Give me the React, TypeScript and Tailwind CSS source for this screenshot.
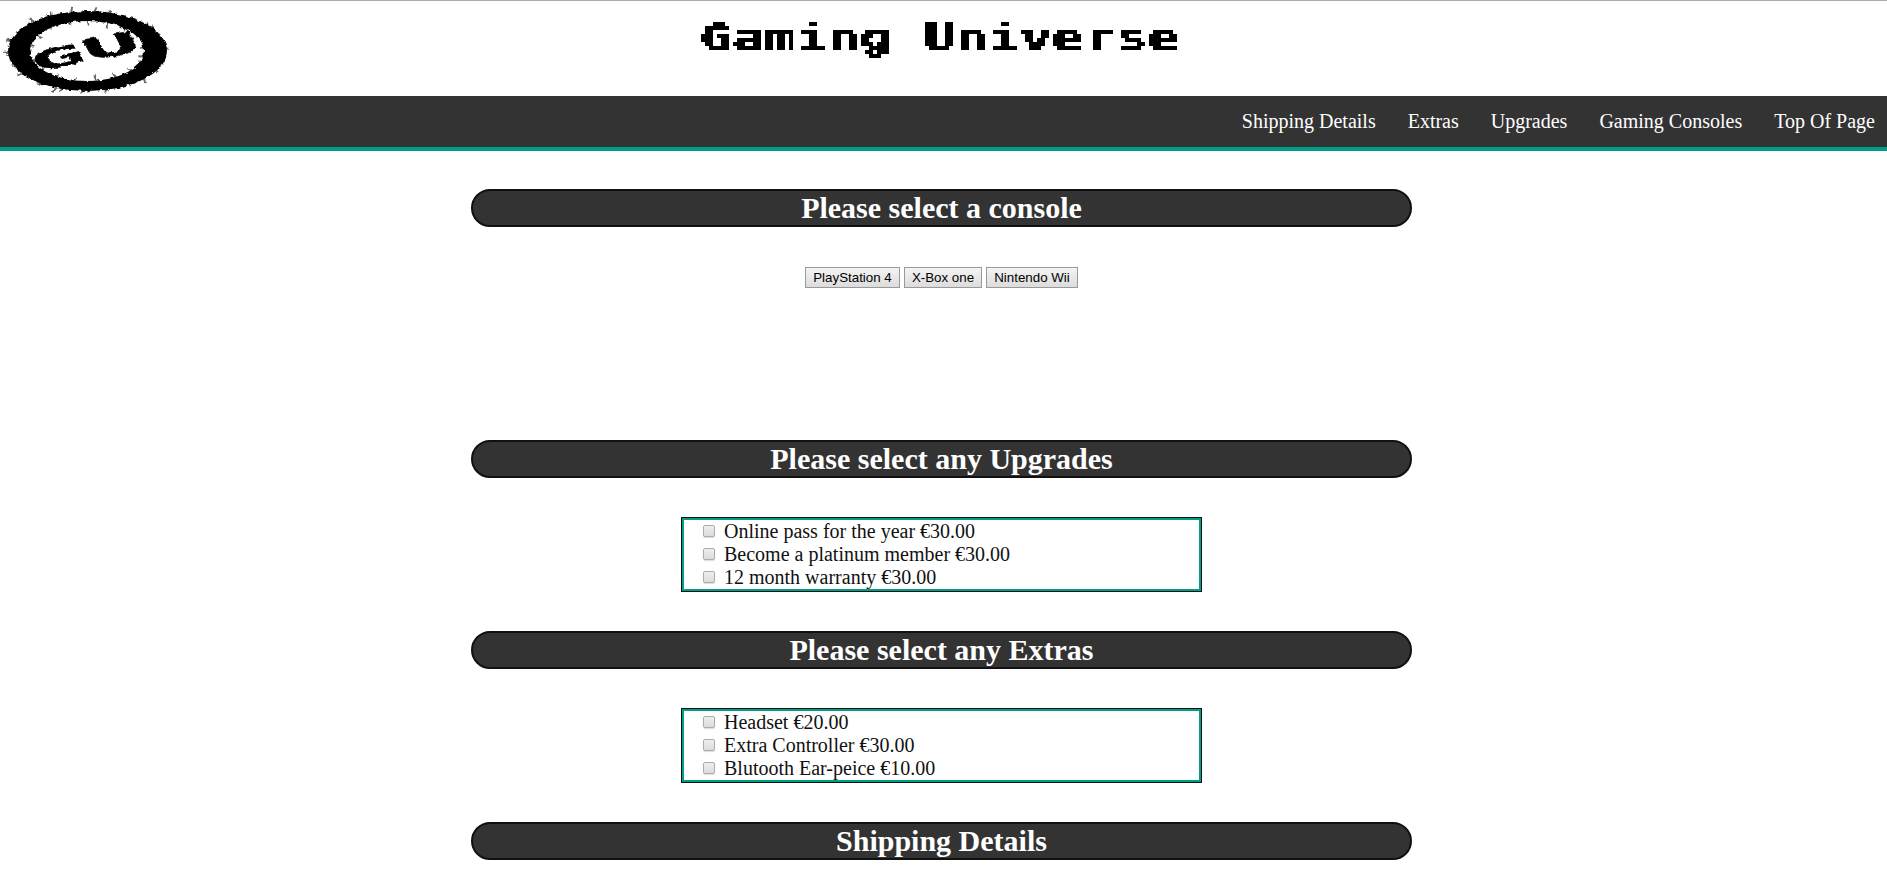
import React from "react";

const links = ["Shipping Details", "Extras", "Upgrades", "Gaming Consoles", "Top Of Page"];
const consoles = [
  { name: "PlayStation 4", width: "w-[95px]" },
  { name: "X-Box one", width: "w-[78px]" },
  { name: "Nintendo Wii", width: "w-[92px]" },
];
const upgrades = ["Online pass for the year €30.00", "Become a platinum member €30.00", "12 month warranty €30.00"];
const extras = ["Headset €20.00", "Extra Controller €30.00", "Blutooth Ear-peice €10.00"];

// Ink spikes scattered around the outer and inner edge of the ring.
const spikes = Array.from({ length: 80 }, (_, i) => {
  const a = i * 2.39996;
  const r = ((i * 7919) % 101) / 101;
  const inner = i % 4 === 0;
  const from = inner ? [58, 30] : [76, 38];
  const reach = inner ? -2 - r * 4 : 2 + r * r * 6;
  return {
    x1: 87 + from[0] * Math.cos(a),
    y1: 51 + from[1] * Math.sin(a),
    x2: 87 + (from[0] + reach) * Math.cos(a + 0.03),
    y2: 51 + (from[1] + reach) * Math.sin(a + 0.03),
    w: 0.7 + r * 1.4,
  };
});

function Logo() {
  return (
    <svg width="180" height="95" viewBox="0 1 180 95" className="block shrink-0">
      <defs>
        <filter id="ink" x="-10%" y="-10%" width="120%" height="120%" colorInterpolationFilters="sRGB">
          <feTurbulence type="fractalNoise" baseFrequency="0.22" numOctaves="2" seed="4" />
          <feDisplacementMap in="SourceGraphic" scale="4" xChannelSelector="R" yChannelSelector="G" />
          <feGaussianBlur stdDeviation="0.5" />
        </filter>
      </defs>
      <g filter="url(#ink)">
        <path
          fillRule="evenodd"
          d="M8 51a79.5 40 0 1 0 159 0a79.5 40 0 1 0 -159 0ZM30 51a57 30 0 1 0 114 0a57 30 0 1 0 -114 0Z"
        />
        {spikes.map((s, i) => (
          <line key={i} x1={s.x1} y1={s.y1} x2={s.x2} y2={s.y2} stroke="#000" strokeOpacity="0.6" strokeWidth={s.w} />
        ))}
      </g>
      <g
        filter="url(#ink)"
        fontFamily="'DejaVu Sans', sans-serif"
        fontWeight="700"
        fontSize="30"
        stroke="#000"
        strokeWidth="0.4"
      >
        <text transform="matrix(2.05 -0.46 0.45 0.84 38 72)">G</text>
        <text transform="matrix(2.4 -0.44 0.5 0.92 87 61)">U</text>
      </g>
    </svg>
  );
}

// Snaps the title's lettering to a 4px block grid.
function BlockFilter() {
  return (
    <svg width="0" height="0" className="absolute">
      <filter
        id="blocks"
        filterUnits="userSpaceOnUse"
        primitiveUnits="userSpaceOnUse"
        x="0"
        y="0"
        width="496"
        height="44"
        colorInterpolationFilters="sRGB"
      >
        <feFlood x="1" y="1" width="1" height="1" floodColor="#000" result="dot" />
        <feComposite in="dot" in2="dot" operator="over" x="0" y="0" width="4" height="4" result="cell" />
        <feTile in="cell" result="grid" />
        <feComponentTransfer in="SourceGraphic" result="solid">
          <feFuncA type="discrete" tableValues="0 1" />
        </feComponentTransfer>
        <feComposite in="solid" in2="grid" operator="in" result="samples" />
        <feMorphology in="samples" operator="dilate" radius="1" result="a" />
        <feOffset in="a" dx="1" dy="0" result="b" />
        <feOffset in="a" dx="0" dy="1" result="c" />
        <feOffset in="a" dx="1" dy="1" result="d" />
        <feMerge>
          <feMergeNode in="a" />
          <feMergeNode in="b" />
          <feMergeNode in="c" />
          <feMergeNode in="d" />
        </feMerge>
      </filter>
    </svg>
  );
}

function Heading({ children }: { children: React.ReactNode }) {
  return (
    <h2 className="h-[38px] w-[941px] rounded-[20px] border-2 border-[#111] bg-[#333] text-center text-[30px] leading-[34px] font-bold text-white">
      {children}
    </h2>
  );
}

function Options({ items }: { items: string[] }) {
  return (
    <div className="h-[75px] w-[521px] border border-[#111]">
      <div className="h-full border-2 border-[#009e86] pl-[19px]">
        {items.map((item) => (
          <label key={item} className="flex h-[23px] items-center gap-[9px] text-[20px] leading-[23px] text-[#111]">
            <input
              type="checkbox"
              className="mb-px h-[12px] w-[12px] appearance-none rounded-[2px] border border-[#acacac] bg-linear-to-b from-[#eee] to-[#dcdcdc] shadow-[0_1px_1px_#ddd]"
            />
            <span className="whitespace-nowrap">{item}</span>
          </label>
        ))}
      </div>
    </div>
  );
}

export default function App() {
  return (
    <div className="flex h-[885px] w-full flex-col overflow-hidden bg-white font-['Liberation_Serif',serif]">
      <BlockFilter />
      <header className="flex h-[96px] shrink-0 border-t border-[#aaa]">
        <Logo />
        <h1 className="mt-[13px] ml-[513px] h-[44px] w-[496px] pl-[6px] [filter:url(#blocks)]">
          <span className="block w-[330px] origin-left scale-x-[1.4766] font-['DejaVu_Sans_Mono',monospace] text-[36px] leading-[46px] font-bold whitespace-pre text-black [text-shadow:0.8px_0_#000]">
            Gaming Universe
          </span>
        </h1>
      </header>
      <nav className="flex h-[55px] shrink-0 items-center justify-end gap-8 border-b-4 border-[#009e86] bg-[#333] pr-3 text-[20px] text-white">
        {links.map((link) => (
          <a key={link} href="#" className="leading-[23px]">
            {link}
          </a>
        ))}
      </nav>
      <main className="flex w-[1883px] flex-col items-center pt-[38px]">
        <Heading>Please select a console</Heading>
        <div className="mt-10 mb-[152px] flex gap-1">
          {consoles.map((c) => (
            <button
              key={c.name}
              className={`${c.width} h-[21px] border border-[#999] bg-linear-to-b from-[#f4f4f4] to-[#dcdcdc] font-['Liberation_Sans',sans-serif] text-[13.333px] leading-[19px] whitespace-nowrap text-black`}
            >
              {c.name}
            </button>
          ))}
        </div>
        <Heading>Please select any Upgrades</Heading>
        <div className="my-[39px]">
          <Options items={upgrades} />
        </div>
        <Heading>Please select any Extras</Heading>
        <div className="my-[39px]">
          <Options items={extras} />
        </div>
        <Heading>Shipping Details</Heading>
      </main>
    </div>
  );
}
